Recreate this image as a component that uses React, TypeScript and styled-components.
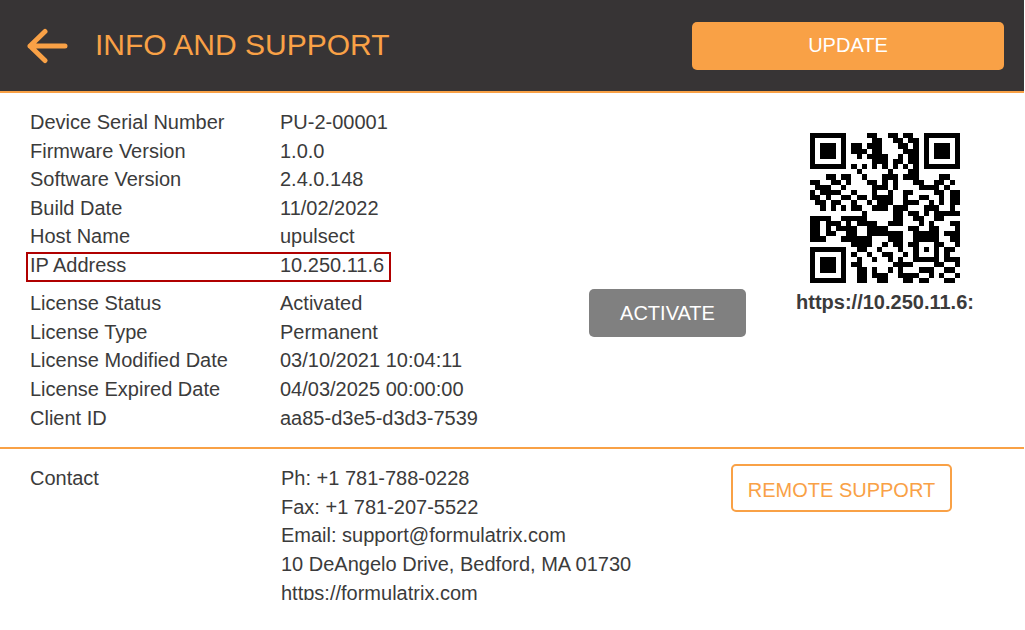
import styled, { createGlobalStyle } from 'styled-components';

const orange = '#f9a146';

const MATRIX = [
  '11111110000110011011001111111',
  '10000010000011001101101000001',
  '10111010110111000110101011101',
  '10111010111011000011101011101',
  '10111010010111100101101011101',
  '10000010000011101101101000001',
  '11111110101010101010101111111',
  '00000000010000010001100000000',
  '00011011001000111011100001100',
  '11001101000110101000110011010',
  '01110010000011101000011110100',
  '10111100100010010011000011011',
  '11010011011011110010011001011',
  '01101100100101110011100101011',
  '00101010110011101110001110010',
  '00000000001000001101101011111',
  '11110011111000001100110011000',
  '11011101011110011100010100011',
  '11010111100111100001100110001',
  '11011001100111111100111110111',
  '11100011111100011100111110011',
  '00000000111100101101100011001',
  '11111110011001000100101010110',
  '10000010100100110010100010100',
  '10111010010010010100111110111',
  '10111010110000001111000011001',
  '10111010011010010100011100110',
  '10000010011011100111100101001',
  '11111110011001100011011000110',
];

export default () => {
  return (
    <Page>
      <GlobalStyle />
      <Header>
        <BackIcon viewBox="0 0 42 36" aria-hidden="true">
          <path d="M38 18H3M18 3.5 3 18l15 14.5" />
        </BackIcon>
        <Title>INFO AND SUPPORT</Title>
        <UpdateButton>UPDATE</UpdateButton>
      </Header>
      <TopSection>
        <InfoColumn>
          <Row label="Device Serial Number" value="PU-2-00001" />
          <Row label="Firmware Version" value="1.0.0" />
          <Row label="Software Version" value="2.4.0.148" />
          <Row label="Build Date" value="11/02/2022" />
          <Row label="Host Name" value="upulsect" />
          <HighlightRow>
            <span>IP Address</span>
            <span>10.250.11.6</span>
          </HighlightRow>
          <Row label="License Status" value="Activated" />
          <Row label="License Type" value="Permanent" />
          <Row label="License Modified Date" value="03/10/2021 10:04:11" />
          <Row label="License Expired Date" value="04/03/2025 00:00:00" />
          <Row label="Client ID" value="aa85-d3e5-d3d3-7539" />
        </InfoColumn>
        <ActivateColumn>
          <ActivateButton>ACTIVATE</ActivateButton>
        </ActivateColumn>
        <QrColumn>
          <QrCode viewBox="0 0 29 29" shapeRendering="crispEdges" aria-hidden="true">
            {MATRIX.map((line, y) =>
              line.split('').map((cell, x) =>
                cell === '1' ? <rect key={`${x}-${y}`} x={x} y={y} width="1" height="1" /> : null
              )
            )}
          </QrCode>
          <QrLabel>https://10.250.11.6:</QrLabel>
        </QrColumn>
      </TopSection>
      <ContactSection>
        <ContactLabel>Contact</ContactLabel>
        <ContactLines>
          <div>Ph: +1 781-788-0228</div>
          <div>Fax: +1 781-207-5522</div>
          <div>Email: support@formulatrix.com</div>
          <div>10 DeAngelo Drive, Bedford, MA 01730</div>
          <div>https://formulatrix.com</div>
        </ContactLines>
        <RemoteButton>REMOTE SUPPORT</RemoteButton>
      </ContactSection>
    </Page>
  );
};

const Row = ({ label, value }: { label: string; value: string }) => (
  <InfoRow>
    <span>{label}</span>
    <span>{value}</span>
  </InfoRow>
);

const GlobalStyle = createGlobalStyle`
  html, body {
    margin: 0;
    background: #fff;
  }
  body {
    font-family: "Liberation Sans", Arial, sans-serif;
    font-size: 20px;
    color: #3b3b3b;
  }
`;

const Page = styled.div`
  width: 1024px;
  height: 600px;
  overflow: hidden;
  background: #fff;
`;

const Header = styled.header`
  box-sizing: border-box;
  height: 93px;
  display: flex;
  align-items: center;
  padding: 0 20px 2px 27px;
  background: #373435;
  border-bottom: 2px solid ${orange};
`;

const BackIcon = styled.svg`
  width: 42px;
  height: 36px;
  margin: 3px 26px 0 0;
  fill: none;
  stroke: ${orange};
  stroke-width: 5;
  stroke-linecap: round;
  stroke-linejoin: round;
`;

const Title = styled.h1`
  flex: 1;
  margin: 0;
  font-size: 30px;
  font-weight: 400;
  color: ${orange};
`;

const Button = styled.button`
  box-sizing: border-box;
  height: 48px;
  border: 0;
  border-radius: 5px;
  padding: 0;
  font-family: inherit;
  font-size: 20px;
  color: #fff;
`;

const UpdateButton = styled(Button)`
  width: 312px;
  margin-top: 3px;
  padding-bottom: 2px;
  background: ${orange};
`;

const TopSection = styled.section`
  display: flex;
  padding: 15px 0 15px 30px;
  border-bottom: 2px solid ${orange};
`;

const InfoColumn = styled.div`
  width: 559px;
`;

const InfoRow = styled.div`
  display: grid;
  grid-template-columns: 250px auto;
  height: 28.6px;
  line-height: 28.6px;
`;

const HighlightRow = styled(InfoRow)`
  position: relative;
  margin-bottom: 9.6px;

  &::after {
    content: '';
    position: absolute;
    top: 1px;
    left: -4px;
    box-sizing: border-box;
    width: 365px;
    height: 30px;
    border: 2px solid #b00000;
  }
`;

const ActivateColumn = styled.div`
  width: 157px;
  padding-top: 181px;
`;

const ActivateButton = styled(Button)`
  width: 157px;
  background: #808080;
`;

const QrColumn = styled.div`
  flex: 1;
  display: flex;
  flex-direction: column;
  align-items: center;
  padding-top: 25px;
`;

const QrCode = styled.svg`
  width: 150px;
  height: 150px;
  fill: #000;
`;

const QrLabel = styled.div`
  margin-top: 8px;
  font-size: 20px;
  font-weight: 700;
  line-height: 22px;
  white-space: nowrap;
`;

const ContactSection = styled.section`
  display: flex;
  align-items: flex-start;
  padding: 15px 0 0 30px;
`;

const ContactLabel = styled.div`
  width: 251px;
  line-height: 28.6px;
`;

const ContactLines = styled.div`
  width: 450px;
  line-height: 28.6px;
`;

const RemoteButton = styled(Button)`
  width: 221px;
  padding-top: 5px;
  background: #fff;
  border: 2px solid ${orange};
  color: ${orange};
`;
